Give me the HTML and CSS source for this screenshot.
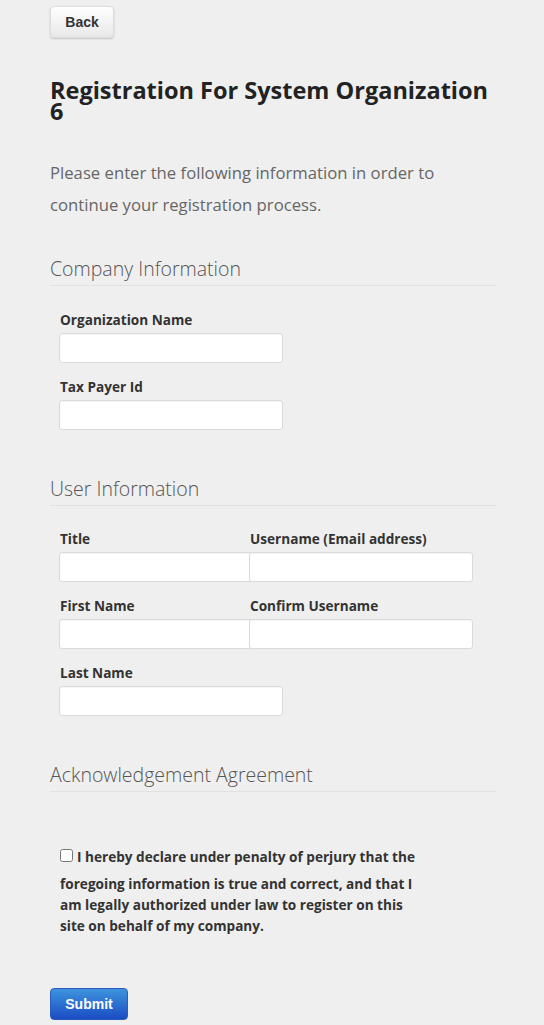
FILE: index.html
```html
<!DOCTYPE html>
<html lang="en">
<head>
<meta charset="utf-8">
<title>Registration</title>
<link rel="stylesheet" href="styles.css">
</head>
<body>
<div class="page">
  <button class="btn btn-back" type="button">Back</button>
  <h1 class="title">Registration For System Organization 6</h1>
  <p class="intro">Please enter the following information in order to continue your registration process.</p>

  <section class="section">
    <h2 class="section-title">Company Information</h2>
    <div class="fields">
      <div class="field">
        <label class="field-label">Organization Name</label>
        <input class="field-input" type="text">
      </div>
      <div class="field">
        <label class="field-label">Tax Payer Id</label>
        <input class="field-input" type="text">
      </div>
    </div>
  </section>

  <section class="section">
    <h2 class="section-title">User Information</h2>
    <div class="fields fields-grid">
      <div class="field">
        <label class="field-label">Title</label>
        <input class="field-input" type="text">
      </div>
      <div class="field">
        <label class="field-label">Username (Email address)</label>
        <input class="field-input" type="text">
      </div>
      <div class="field">
        <label class="field-label">First Name</label>
        <input class="field-input" type="text">
      </div>
      <div class="field">
        <label class="field-label">Confirm Username</label>
        <input class="field-input" type="text">
      </div>
      <div class="field">
        <label class="field-label">Last Name</label>
        <input class="field-input" type="text">
      </div>
    </div>
  </section>

  <section class="section">
    <h2 class="section-title">Acknowledgement Agreement</h2>
    <label class="agree"><input class="agree-box" type="checkbox">I hereby declare under penalty of perjury that the foregoing information is true and correct, and that I am legally authorized under law to register on this site on behalf of my company.</label>
  </section>

  <button class="btn btn-submit" type="button">Submit</button>
</div>
</body>
</html>
```

FILE: styles.css
```css
html, body {
  margin: 0;
  padding: 0;
}

body {
  background: #efefef;
  font-family: "Open Sans", "Noto Sans", sans-serif;
  color: #333;
}

.page {
  width: 446px;
  padding: 6px 0 40px 50px;
}

.btn {
  display: block;
  font-family: "Liberation Sans", Arial, sans-serif;
  font-weight: 700;
  font-size: 14px;
  border-radius: 4px;
  height: 32px;
  padding: 0;
  cursor: pointer;
}

.btn-back {
  width: 64px;
  color: #333;
  background: linear-gradient(#ffffff, #e8e8e8);
  border: 1px solid #dcdcdc;
  box-shadow: 0 1px 2px rgba(0, 0, 0, 0.18);
}

.title {
  margin: 42px 0 0;
  font-size: 23.5px;
  line-height: 21px;
  font-weight: 700;
  color: #222;
}

.intro {
  margin: 35px 0 0;
  font-size: 16.7px;
  line-height: 32px;
  color: #666;
}

.section-title {
  margin: 36px 0 0;
  padding-bottom: 4px;
  font-size: 19.5px;
  line-height: 24px;
  font-weight: 300;
  color: #555;
  border-bottom: 1px solid #e2e2e2;
}

.section + .section .section-title {
  margin-top: 47px;
}

.fields {
  margin-top: 24px;
  padding-left: 9px;
  display: flex;
  flex-direction: column;
  gap: 14px;
}

.fields-grid {
  display: grid;
  grid-template-columns: 190px 1fr;
  column-gap: 0;
  row-gap: 14px;
  margin-top: 23px;
}

.field {
  display: flex;
  flex-direction: column;
  gap: 3px;
}

.field-label {
  padding-left: 1px;
  font-size: 13.6px;
  line-height: 20px;
  font-weight: 700;
  color: #333;
}

.field-input {
  box-sizing: border-box;
  width: 224px;
  height: 30px;
  margin: 0;
  background: #fff;
  border: 1px solid #dadada;
  border-radius: 3px;
  box-shadow: inset 0 1px 1px rgba(0, 0, 0, 0.04);
}

.agree {
  display: block;
  width: 362px;
  margin: 54px 0 0 10px;
  font-size: 13.6px;
  line-height: 21px;
  font-weight: 700;
  color: #333;
}

.agree-box {
  width: 13px;
  height: 13px;
  margin: 0 4px 11px 0;
  vertical-align: baseline;
}

.btn-submit {
  margin-top: 52px;
  width: 78px;
  color: #fff;
  background: linear-gradient(#3d94de, #1b4cc3);
  border: 1px solid #2a5cbf;
}
```
